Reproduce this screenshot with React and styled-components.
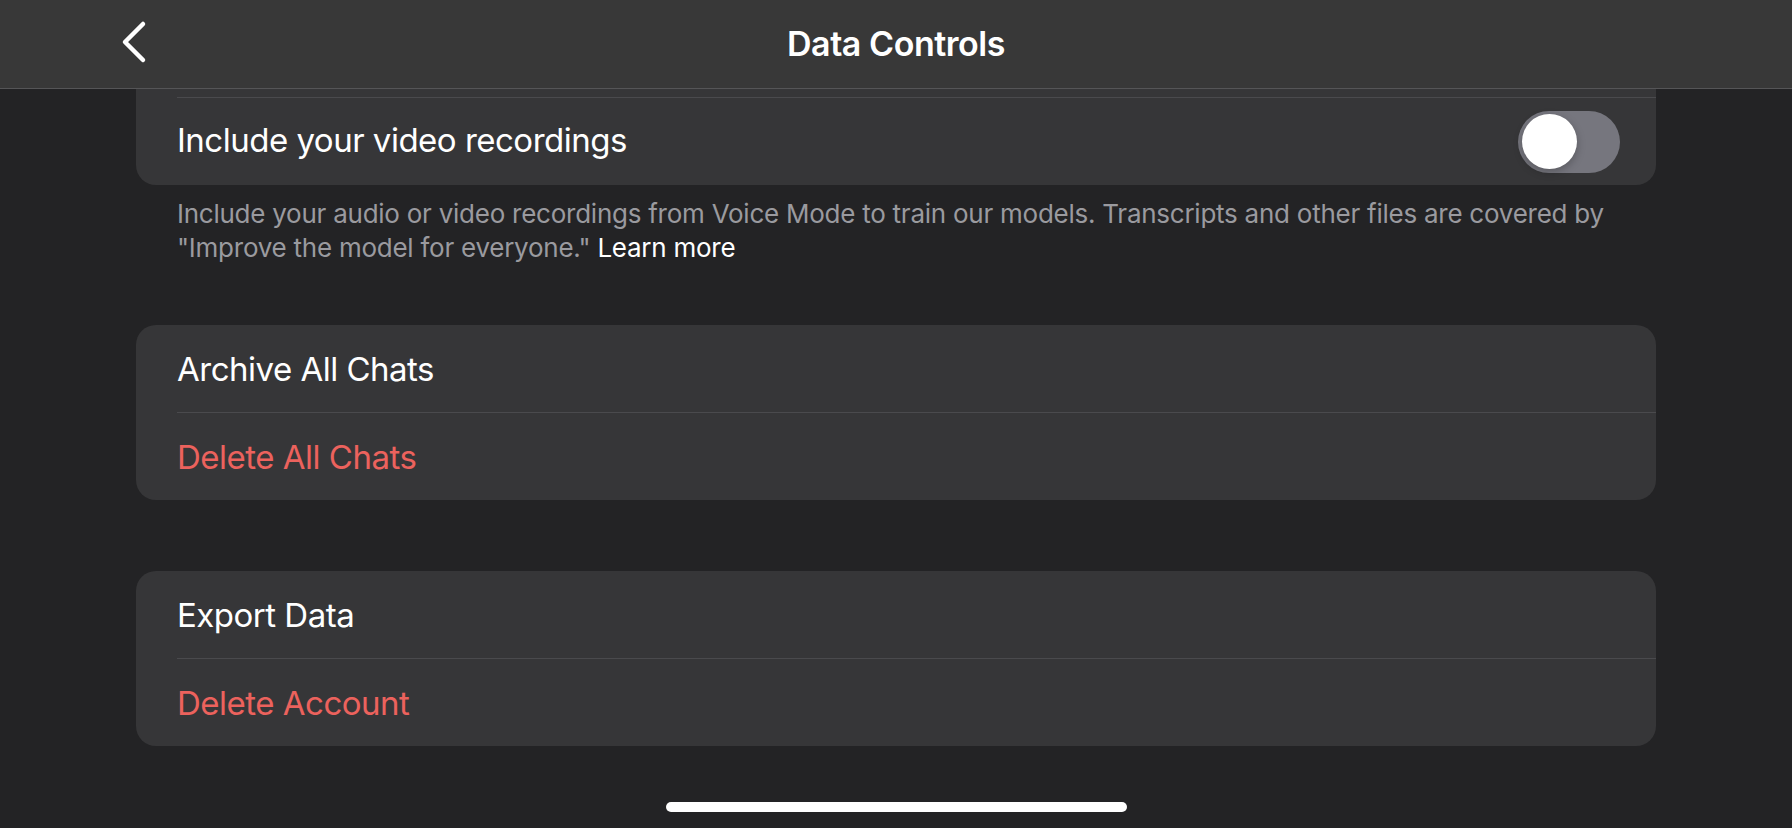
import React, { useState } from "react";
import styled, { createGlobalStyle } from "styled-components";

const GlobalStyle = createGlobalStyle`
  html, body {
    margin: 0;
    padding: 0;
    background: #232325;
  }
  body {
    font-family: Inter, "Noto Sans", sans-serif;
    -webkit-font-smoothing: antialiased;
  }
`;

const Screen = styled.div`
  width: 1792px;
  height: 828px;
  display: flex;
  flex-direction: column;
  overflow: hidden;
  background: #232325;
`;

const NavBar = styled.header`
  height: 88px;
  flex-shrink: 0;
  display: grid;
  grid-template-columns: 1fr auto 1fr;
  align-items: center;
  background: #383838;
  border-bottom: 1px solid #555557;
`;

const BackButton = styled.button`
  justify-self: start;
  margin-left: 118px;
  margin-bottom: 4px;
  width: 32px;
  height: 48px;
  padding: 0;
  border: none;
  background: none;
  display: flex;
  align-items: center;
  justify-content: center;
  cursor: pointer;
`;

const Title = styled.h1`
  margin: 0 0 2px;
  font-size: 34px;
  font-weight: 600;
  letter-spacing: -0.45px;
  color: #ffffff;
`;

const Content = styled.main`
  flex: 1;
  display: flex;
  flex-direction: column;
  padding: 0 136px;
`;

const Card = styled.section`
  background: #363638;
  border-radius: ${(p) => (p.$clipped ? "0 0 20px 20px" : "20px")};
  padding-top: ${(p) => (p.$clipped ? "8px" : "0")};
  margin-top: ${(p) => p.$gap || 0}px;
  overflow: hidden;
`;

const Row = styled.div`
  height: 87px;
  display: flex;
  align-items: center;
  justify-content: space-between;
  padding: 0 36px 0 41px;
  font-size: 33px;
  letter-spacing: -0.5px;
  color: ${(p) => (p.$danger ? "#ec625d" : "#ffffff")};
  cursor: pointer;
`;

const Label = styled.span`
  margin-bottom: ${(p) => p.$lift || 0}px;
`;

const Divider = styled.div`
  height: 1px;
  margin-left: 41px;
  background: #4a4a4d;
`;

const Footnote = styled.p`
  margin: 0;
  padding: 12px 41px 0;
  font-size: 26px;
  line-height: 34px;
  letter-spacing: -0.25px;
  color: #9a9a9f;
`;

const FootLink = styled.a`
  color: #ffffff;
  text-decoration: none;
`;

const Track = styled.button`
  width: 102px;
  height: 62px;
  padding: 4px;
  border: none;
  border-radius: 31px;
  background: ${(p) => (p.$on ? "#34c759" : "#76767e")};
  display: flex;
  justify-content: ${(p) => (p.$on ? "flex-end" : "flex-start")};
  align-items: center;
  cursor: pointer;
`;

const Knob = styled.span`
  width: 55px;
  height: 55px;
  border-radius: 50%;
  background: #ffffff;
  box-shadow: 0 3px 8px rgba(0, 0, 0, 0.25);
`;

const HomeIndicator = styled.div`
  align-self: center;
  margin: auto 0 16px;
  width: 461px;
  height: 10px;
  border-radius: 5px;
  background: #ffffff;
`;

const Toggle = ({ on, onChange }) => (
  <Track $on={on} onClick={() => onChange(!on)}>
    <Knob />
  </Track>
);

const ChevronLeft = () => (
  <svg width="30" height="44" viewBox="0 0 30 44" fill="none">
    <polyline
      points="24,4 6,22 24,40"
      stroke="#ffffff"
      strokeWidth="4.5"
      strokeLinecap="round"
      strokeLinejoin="round"
    />
  </svg>
);

export default function App() {
  const [videoOn, setVideoOn] = useState(false);

  return (
    <>
      <GlobalStyle />
      <Screen>
        <NavBar>
          <BackButton aria-label="back">
            <ChevronLeft />
          </BackButton>
          <Title>Data Controls</Title>
          <span />
        </NavBar>
        <Content>
          <Card $clipped>
            <Divider />
            <Row>
              <Label $lift={3}>Include your video recordings</Label>
              <Toggle on={videoOn} onChange={setVideoOn} />
            </Row>
          </Card>
          <Footnote>
            Include your audio or video recordings from Voice Mode to train our
            models. Transcripts and other files are covered by
            <br />
            "Improve the model for everyone." <FootLink href="#">Learn more</FootLink>
          </Footnote>
          <Card $gap={60}>
            <Row>
              <Label>Archive All Chats</Label>
            </Row>
            <Divider />
            <Row $danger>
              <Label>Delete All Chats</Label>
            </Row>
          </Card>
          <Card $gap={71}>
            <Row>
              <Label>Export Data</Label>
            </Row>
            <Divider />
            <Row $danger>
              <Label>Delete Account</Label>
            </Row>
          </Card>
          <HomeIndicator />
        </Content>
      </Screen>
    </>
  );
}
